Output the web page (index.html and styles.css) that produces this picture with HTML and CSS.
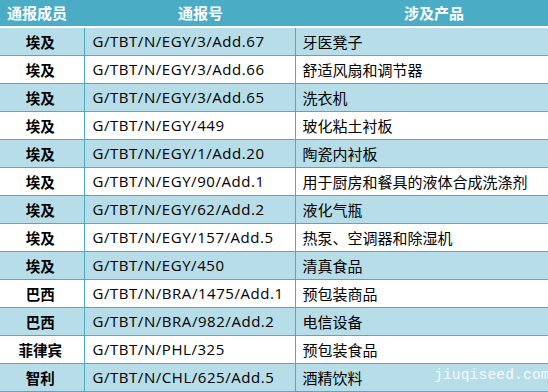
FILE: index.html
```html
<!DOCTYPE html>
<html>
<head>
<meta charset="utf-8">
<link rel="stylesheet" href="styles.css">
</head>
<body>
<div class="wrap">
<table class="notif">
  <colgroup>
    <col class="c1"><col class="c2"><col class="c3">
  </colgroup>
  <thead>
    <tr><th class="h1">通报成员</th><th class="h2">通报号</th><th class="h3">涉及产品</th></tr>
  </thead>
  <tbody>
    <tr class="alt"><td class="m">埃及</td><td class="n">G/TBT/N/EGY/3/Add.67</td><td class="p">牙医凳子</td></tr>
    <tr><td class="m">埃及</td><td class="n">G/TBT/N/EGY/3/Add.66</td><td class="p">舒适风扇和调节器</td></tr>
    <tr class="alt"><td class="m">埃及</td><td class="n">G/TBT/N/EGY/3/Add.65</td><td class="p">洗衣机</td></tr>
    <tr><td class="m">埃及</td><td class="n">G/TBT/N/EGY/449</td><td class="p">玻化粘土衬板</td></tr>
    <tr class="alt"><td class="m">埃及</td><td class="n">G/TBT/N/EGY/1/Add.20</td><td class="p">陶瓷内衬板</td></tr>
    <tr><td class="m">埃及</td><td class="n">G/TBT/N/EGY/90/Add.1</td><td class="p">用于厨房和餐具的液体合成洗涤剂</td></tr>
    <tr class="alt"><td class="m">埃及</td><td class="n">G/TBT/N/EGY/62/Add.2</td><td class="p">液化气瓶</td></tr>
    <tr><td class="m">埃及</td><td class="n">G/TBT/N/EGY/157/Add.5</td><td class="p">热泵、空调器和除湿机</td></tr>
    <tr class="alt"><td class="m">埃及</td><td class="n">G/TBT/N/EGY/450</td><td class="p">清真食品</td></tr>
    <tr><td class="m">巴西</td><td class="n">G/TBT/N/BRA/1475/Add.1</td><td class="p">预包装商品</td></tr>
    <tr class="alt"><td class="m">巴西</td><td class="n">G/TBT/N/BRA/982/Add.2</td><td class="p">电信设备</td></tr>
    <tr><td class="m">菲律宾</td><td class="n">G/TBT/N/PHL/325</td><td class="p">预包装食品</td></tr>
    <tr class="alt"><td class="m">智利</td><td class="n">G/TBT/N/CHL/625/Add.5</td><td class="p">酒精饮料</td></tr>
  </tbody>
</table>
<div class="watermark">jiuqiseed.com</div>
</div>
</body>
</html>
```

FILE: styles.css
```css
html, body {
  margin: 0;
  padding: 0;
  background: #ffffff;
}

.wrap {
  position: relative;
  width: 548px;
  height: 392px;
  overflow: hidden;
}

.notif {
  width: 548px;
  border-collapse: collapse;
  table-layout: fixed;
  font-family: "Open Sans", "Noto Sans CJK SC", sans-serif;
  color: #000000;
}

.c1 { width: 84px; }
.c2 { width: 211px; }
.c3 { width: 253px; }

.notif th {
  background: #4bacc6;
  color: #ffffff;
  font-family: "Noto Sans CJK SC", sans-serif;
  font-weight: 700;
  font-size: 15px;
  height: 26px;
  padding: 0;
  border-bottom: 2px solid #ffffff;
  line-height: 26px;
}

.notif .h1 { text-align: left; padding-left: 7px; }
.notif .h2 { text-align: left; padding-left: 94px; }
.notif .h3 { text-align: left; padding-left: 109px; }

.notif td {
  height: 27px;
  padding: 0;
  border-bottom: 1px solid #4bacc6;
  font-size: 15px;
  line-height: 27px;
  white-space: nowrap;
  overflow: hidden;
}

.notif tr.alt td {
  background: #b7dde8;
}

.notif td.m {
  text-align: center;
  font-family: "Noto Sans CJK SC", sans-serif;
  font-weight: 700;
  font-size: 14.5px;
  border-right: 1px solid #4bacc6;
  padding-right: 3px;
}

.notif td.n {
  padding-left: 8px;
  border-right: 1px solid #4bacc6;
  letter-spacing: 0.55px;
}

.notif td.p {
  padding-left: 7px;
  font-family: "Noto Sans CJK SC", sans-serif;
  font-size: 15px;
}

.watermark {
  position: absolute;
  left: 434px;
  top: 367px;
  font-family: "Liberation Mono", monospace;
  font-size: 14.5px;
  color: rgba(255, 255, 255, 0.9);
  letter-spacing: 0.2px;
}
```
